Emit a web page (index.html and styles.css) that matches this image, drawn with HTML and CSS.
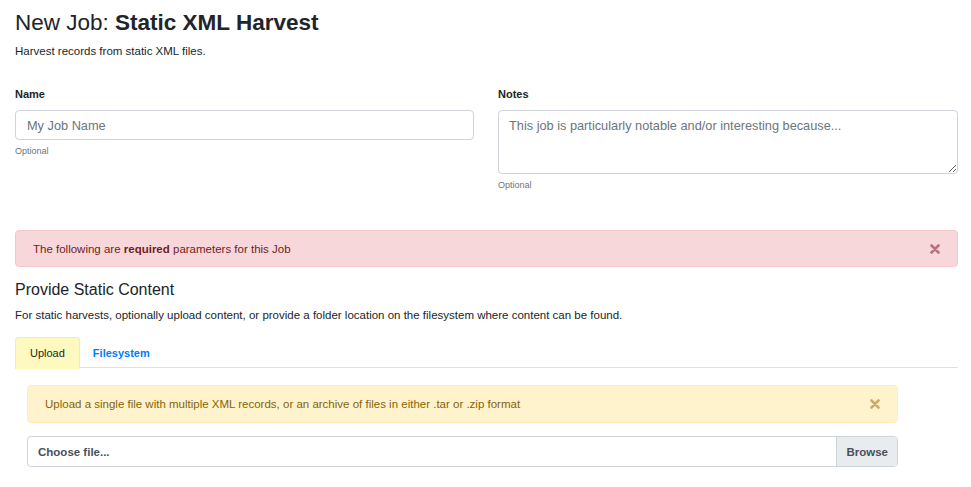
FILE: index.html
```html
<!DOCTYPE html>
<html>
<head>
<meta charset="utf-8">
<link rel="stylesheet" href="styles.css">
</head>
<body>
<div class="page">
  <h1 class="title">New Job: <strong>Static XML Harvest</strong></h1>
  <p class="lead">Harvest records from static XML files.</p>

  <div class="fields">
    <div class="field">
      <label class="label">Name</label>
      <input class="input" type="text" placeholder="My Job Name">
      <small class="help">Optional</small>
    </div>
    <div class="field">
      <label class="label">Notes</label>
      <textarea class="input textarea" placeholder="This job is particularly notable and/or interesting because..."></textarea>
      <small class="help">Optional</small>
    </div>
  </div>

  <div class="alert alert-danger">
    <span>The following are <strong>required</strong> parameters for this Job</span>
    <svg class="close" width="10" height="10" viewBox="0 0 10 10"><path d="M1.5 1.5L8.5 8.5M8.5 1.5L1.5 8.5" stroke="currentColor" stroke-width="2.6" stroke-linecap="round"/></svg>
  </div>

  <h2 class="section">Provide Static Content</h2>
  <p class="desc">For static harvests, optionally upload content, or provide a folder location on the filesystem where content can be found.</p>

  <div class="tabs">
    <span class="tab active">Upload</span>
    <span class="tab link">Filesystem</span>
  </div>

  <div class="panel">
    <div class="alert alert-warning">
      <span>Upload a single file with multiple XML records, or an archive of files in either .tar or .zip format</span>
      <svg class="close" width="10" height="10" viewBox="0 0 10 10"><path d="M1.5 1.5L8.5 8.5M8.5 1.5L1.5 8.5" stroke="currentColor" stroke-width="2.6" stroke-linecap="round"/></svg>
    </div>
    <div class="file">
      <span class="file-label">Choose file...</span>
      <span class="file-btn">Browse</span>
    </div>
  </div>
</div>
</body>
</html>
```

FILE: styles.css
```css
* { box-sizing: border-box; }
html, body { margin: 0; padding: 0; background: #fff; }
body {
  font-family: "Liberation Sans", Arial, Helvetica, sans-serif;
  color: #212529;
  font-size: 11.5px;
}
.page {
  padding: 10px 13px 0 15px;
}
.title {
  font-size: 22.5px;
  font-weight: 400;
  line-height: 26px;
  margin: 0 0 7px 0;
}
.title strong { font-weight: 700; }
.lead {
  font-size: 11.5px;
  line-height: 16px;
  margin: 0 0 28px 0;
}
.fields {
  display: grid;
  grid-template-columns: 459px 460px;
  column-gap: 24px;
}
.field { display: flex; flex-direction: column; }
.label {
  font-weight: 700;
  font-size: 11px;
  line-height: 14px;
  margin-bottom: 9px;
}
.input {
  font-family: inherit;
  font-size: 12.75px;
  color: #495057;
  height: 30px;
  padding: 5px 11px;
  border: 1px solid #ced4da;
  border-radius: 4px;
  background: #fff;
  width: 100%;
  margin: 0;
}
.input::placeholder { color: #6c757d; opacity: 1; }
.textarea {
  height: 64px;
  padding: 6px 10px;
  line-height: 18px;
  resize: vertical;
  display: block;
}
.help {
  font-size: 9px;
  color: #6c757d;
  margin-top: 6px;
  line-height: 11px;
}
.alert {
  display: flex;
  align-items: center;
  justify-content: space-between;
  border: 1px solid;
  border-radius: 4px;
  font-size: 11.5px;
  line-height: 16px;
}
.alert-danger {
  margin-top: 39px;
  height: 37px;
  padding: 0 17px 0 17px;
  background: #f8d7da;
  border-color: #f5c6cb;
  color: #721c24;
}
.alert-danger .close { color: #b5727a; }
.alert-warning {
  height: 38px;
  padding: 0 17px 0 17px;
  background: #fff3cd;
  border-color: #ffeeba;
  color: #856404;
}
.alert-warning .close { color: #c9ad6b; }
.section {
  font-size: 16px;
  font-weight: 400;
  line-height: 20px;
  margin: 13px 0 7px 0;
}
.desc {
  margin: 0 0 14px 0;
  font-size: 11.5px;
  line-height: 16px;
}
.tabs {
  display: flex;
  border-bottom: 1px solid #dee2e6;
  height: 31px;
}
.tab {
  display: flex;
  align-items: center;
  font-size: 11px;
  height: 31px;
  border: 1px solid transparent;
  border-top-left-radius: 4px;
  border-top-right-radius: 4px;
}
.tab.active {
  padding: 0 14px;
  background: #fdf9bf;
  border-color: #ece8c8 #ece8c8 transparent;
  color: #212529;
  margin-bottom: -1px;
  height: 32px;
}
.tab.link { color: #007bff; font-weight: 700; padding: 0 12px; }
.panel {
  padding: 17px 60px 0 12px;
}
.file {
  margin-top: 13px;
  display: flex;
  height: 31px;
  border: 1px solid #ced4da;
  border-radius: 4px;
  overflow: hidden;
}
.file-label {
  flex: 1;
  display: flex;
  align-items: center;
  padding: 0 10px;
  font-weight: 700;
  color: #495057;
  font-size: 11.5px;
}
.file-btn {
  display: flex;
  align-items: center;
  padding: 0 9px;
  background: #e9ecef;
  border-left: 1px solid #ced4da;
  font-weight: 700;
  color: #495057;
  font-size: 11.5px;
}
```
